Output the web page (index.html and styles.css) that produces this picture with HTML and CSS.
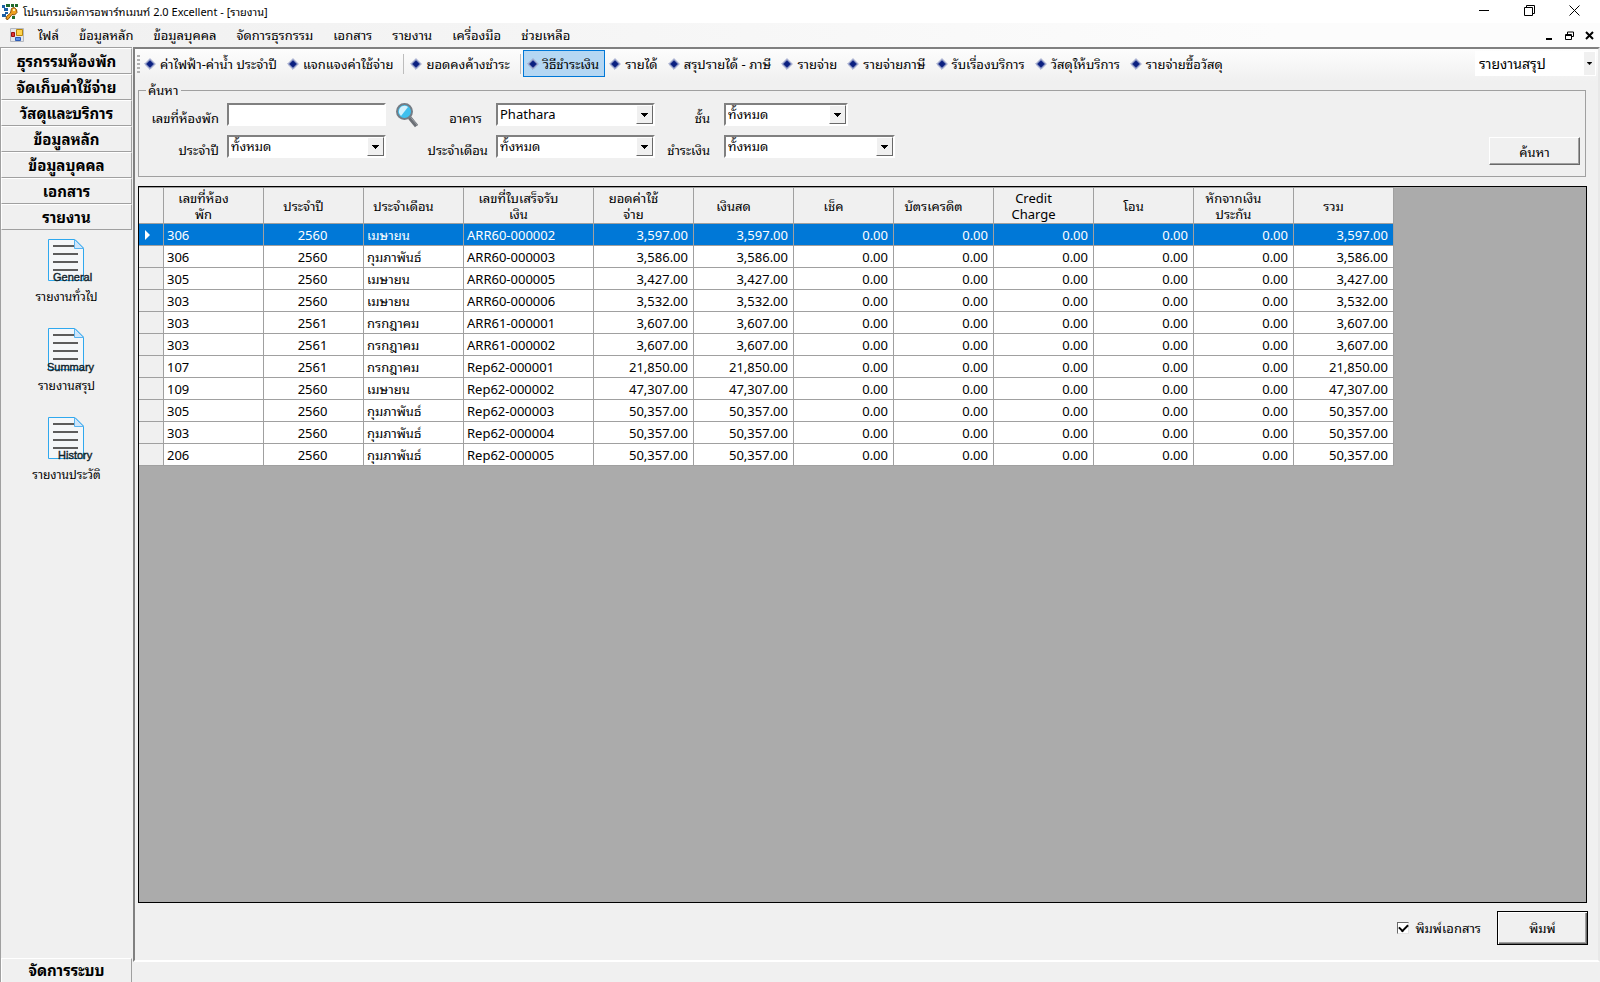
FILE: index.html
```html
<!DOCTYPE html>
<html lang="th">
<head>
<meta charset="utf-8">
<title>โปรแกรมจัดการอพาร์ทเมนท์ 2.0 Excellent - [รายงาน]</title>
<link rel="stylesheet" href="styles.css">
</head>
<body>
<svg class="defs" width="0" height="0" aria-hidden="true">
  <symbol id="diamond" viewBox="0 0 12 12"><path d="M6 .7 11.300 6 6 11.300 .7 6Z" fill="#dfe3f2" stroke="#8c96c0"/><path d="M6 2.500 9.500 6 6 9.500 2.500 6Z" fill="#0a1f80" stroke="#0a1f80"/></symbol>
  <symbol id="arrow" viewBox="0 0 7 4"><path d="M0 0H7V1H6V2H5V3H4V4H3V3H2V2H1V1H0Z"/></symbol>
  <symbol id="doc" viewBox="0 0 36 42"><path d="M.5.5H27L35.500 9V41.500H.5Z" fill="#f4f6f8" stroke="#2fa8ee"/><path d="M26.500.5V9.500H35.500Z" fill="#cfe6fb" stroke="#5ab4f0"/><path d="M5 7H26M5 15H30M5 23H30M5 31H30" stroke="#5c5c5c" stroke-width="2"/></symbol>
</svg>
<div class="window">
  <header class="titlebar">
    <svg class="app-icon" viewBox="0 0 16 16" aria-hidden="true"><path d="M4 0H8V3H4ZM9 0H12V3H9ZM13 0H16V3H13Z" fill="#1f6b2e"/><path d="M0 1H3V4H0ZM2 4H6V7H2ZM0 10H4V13H0ZM3 8H6V10H3Z" fill="#1c5fa5"/><path d="M9.500 4.500 12 3.500 14.500 5.500 15 8.500 12.500 11 10 10.500 6 15.500 4 15 4.500 12.500 8.500 9Z" fill="#f0a020" stroke="#8a5008"/><path d="M11 5H13V7H11Z" fill="#fff1b0"/><path d="M10 12H13V15H10Z" fill="#1f6b2e"/></svg>
    <h1>โปรแกรมจัดการอพาร์ทเมนท์ 2.0 Excellent - [รายงาน]</h1>
    <div class="window-buttons">
      <button type="button" aria-label="Minimize"><svg width="11" height="11"><path d="M0 5.500H10"/></svg></button>
      <button type="button" aria-label="Restore"><svg width="11" height="11"><path d="M.5 2.500H8.500V10.500H.5ZM2.500 2.500V.5H10.500V8.500H8.500"/></svg></button>
      <button type="button" aria-label="Close"><svg width="11" height="11"><path d="M.5.5 10.500 10.500M10.500.5.5 10.500"/></svg></button>
    </div>
  </header>
  <nav class="menubar">
    <svg class="form-icon" viewBox="0 0 14 14" aria-hidden="true"><path d="M.5.5H13.500V13.500H.5Z" fill="#e4e6ea" stroke="#b4b8c0"/><path d="M6.500 1.500H12.500V7.500H6.500Z" fill="#ffd34d" stroke="#b88608"/><path d="M1.500 4.500H4.500V8.500H1.500Z" fill="#d33" stroke="#911"/><path d="M5.500 9.500H10.500V12.500H5.500Z" fill="#5b8fe8" stroke="#2c5cb8"/></svg>
    <button type="button">ไฟล์</button><button type="button">ข้อมูลหลัก</button><button type="button">ข้อมูลบุคคล</button><button type="button">จัดการธุรกรรม</button><button type="button">เอกสาร</button><button type="button">รายงาน</button><button type="button">เครื่องมือ</button><button type="button">ช่วยเหลือ</button>
    <div class="mdi-buttons">
      <button type="button" aria-label="Minimize child"><svg width="9" height="9"><path d="M1 8H7" stroke-width="2"/></svg></button>
      <button type="button" aria-label="Restore child"><svg width="9" height="9"><path d="M.5 3.500H6.500V8.500H.5ZM2.500 3V1H8.500V5.500H7M.5 4.500H6"/></svg></button>
      <button type="button" aria-label="Close child"><svg width="9" height="9"><path d="M1 1 8 8M8 1 1 8" stroke-width="2"/></svg></button>
    </div>
  </nav>
  <div class="body">
    <aside class="sidebar">
      <button type="button" class="group">ธุรกรรมห้องพัก</button>
      <button type="button" class="group">จัดเก็บค่าใช้จ่าย</button>
      <button type="button" class="group">วัสดุและบริการ</button>
      <button type="button" class="group">ข้อมูลหลัก</button>
      <button type="button" class="group">ข้อมูลบุคคล</button>
      <button type="button" class="group">เอกสาร</button>
      <button type="button" class="group">รายงาน</button>
      <div class="shortcuts">
        <a href="#general"><svg width="38" height="46" aria-hidden="true"><use href="#doc" width="36" height="42"/><text x="5" y="42">General</text></svg><span>รายงานทั่วไป</span></a>
        <a href="#summary"><svg width="38" height="46" aria-hidden="true"><use href="#doc" width="36" height="42"/><text x="-1" y="43">Summary</text></svg><span>รายงานสรุป</span></a>
        <a href="#history"><svg width="38" height="46" aria-hidden="true"><use href="#doc" width="36" height="42"/><text x="10" y="42">History</text></svg><span>รายงานประวัติ</span></a>
      </div>
      <button type="button" class="group">จัดการระบบ</button>
    </aside>
    <div class="workspace">
      <main class="report">
        <div class="toolbar">
          <span class="grip"></span>
          <button type="button"><svg><use href="#diamond"/></svg>ค่าไฟฟ้า-ค่าน้ำ ประจำปี</button>
          <button type="button"><svg><use href="#diamond"/></svg>แจกแจงค่าใช้จ่าย</button>
          <span class="divider"></span>
          <button type="button"><svg><use href="#diamond"/></svg>ยอดคงค้างชำระ</button>
          <span class="divider"></span>
          <button type="button" class="active"><svg><use href="#diamond"/></svg>วิธีชำระเงิน</button>
          <button type="button"><svg><use href="#diamond"/></svg>รายได้</button>
          <button type="button"><svg><use href="#diamond"/></svg>สรุปรายได้ - ภาษี</button>
          <button type="button"><svg><use href="#diamond"/></svg>รายจ่าย</button>
          <button type="button"><svg><use href="#diamond"/></svg>รายจ่ายภาษี</button>
          <button type="button"><svg><use href="#diamond"/></svg>รับเรื่องบริการ</button>
          <button type="button"><svg><use href="#diamond"/></svg>วัสดุให้บริการ</button>
          <button type="button"><svg><use href="#diamond"/></svg>รายจ่ายซื้อวัสดุ</button>
          <span class="flat-select"><select aria-label="ประเภทรายงาน"><option>รายงานสรุป</option></select><span class="drop"><svg width="5" height="3" viewBox="0 0 7 4"><use href="#arrow"/></svg></span></span>
        </div>
        <fieldset class="search">
          <legend>ค้นหา</legend>
          <div class="fields">
            <label for="room">เลขที่ห้องพัก</label>
            <input id="room" type="text">
            <button type="button" class="lookup" aria-label="ค้นหาห้องพัก"><svg width="25" height="26" viewBox="0 0 25 26"><path d="M14.500 14.500 21.500 23" stroke="#6b6f75" stroke-width="4"/><path d="M15 13.500 22.500 22.500" stroke="#9a9ea3" stroke-width="1"/><circle cx="9.500" cy="8.500" r="7.500" fill="#3fc0ee" stroke="#747c85" stroke-width="2"/><path d="M4 10C3 4 9 1 13 4L6 13Z" fill="#d3f1fd"/></svg></button>
            <label for="building" class="inset">อาคาร</label>
            <span class="combo"><select id="building"><option>Phathara</option></select><span class="drop"><svg width="7" height="4"><use href="#arrow"/></svg></span></span>
            <label for="floor" class="inset">ชั้น</label>
            <span class="combo short"><select id="floor"><option>ทั้งหมด</option></select><span class="drop"><svg width="7" height="4"><use href="#arrow"/></svg></span></span>
            <label for="year">ประจำปี</label>
            <span class="combo"><select id="year"><option>ทั้งหมด</option></select><span class="drop"><svg width="7" height="4"><use href="#arrow"/></svg></span></span>
            <label for="month" class="wide">ประจำเดือน</label>
            <span class="combo"><select id="month"><option>ทั้งหมด</option></select><span class="drop"><svg width="7" height="4"><use href="#arrow"/></svg></span></span>
            <label for="pay" class="inset">ชำระเงิน</label>
            <span class="combo"><select id="pay"><option>ทั้งหมด</option></select><span class="drop"><svg width="7" height="4"><use href="#arrow"/></svg></span></span>
          </div>
          <button type="submit" class="push">ค้นหา</button>
        </fieldset>
        <div class="grid">
          <table>
            <colgroup><col class="marker"><col><col><col><col class="receipt"><col><col><col><col><col><col><col><col></colgroup>
            <thead><tr><th></th><th>เลขที่ห้อง<br>พัก</th><th>ประจำปี</th><th>ประจำเดือน</th><th>เลขที่ใบเสร็จรับ<br>เงิน</th><th>ยอดค่าใช้<br>จ่าย</th><th>เงินสด</th><th>เช็ค</th><th>บัตรเครดิต</th><th>Credit<br>Charge</th><th>โอน</th><th>หักจากเงิน<br>ประกัน</th><th>รวม</th></tr></thead>
            <tbody>
              <tr class="selected"><th><svg width="5" height="10"><path d="M0 0 5 5 0 10Z" fill="#fff"/></svg></th><td>306</td><td>2560</td><td>เมษายน</td><td>ARR60-000002</td><td>3,597.00</td><td>3,597.00</td><td>0.00</td><td>0.00</td><td>0.00</td><td>0.00</td><td>0.00</td><td>3,597.00</td></tr>
              <tr><th></th><td>306</td><td>2560</td><td>กุมภาพันธ์</td><td>ARR60-000003</td><td>3,586.00</td><td>3,586.00</td><td>0.00</td><td>0.00</td><td>0.00</td><td>0.00</td><td>0.00</td><td>3,586.00</td></tr>
              <tr><th></th><td>305</td><td>2560</td><td>เมษายน</td><td>ARR60-000005</td><td>3,427.00</td><td>3,427.00</td><td>0.00</td><td>0.00</td><td>0.00</td><td>0.00</td><td>0.00</td><td>3,427.00</td></tr>
              <tr><th></th><td>303</td><td>2560</td><td>เมษายน</td><td>ARR60-000006</td><td>3,532.00</td><td>3,532.00</td><td>0.00</td><td>0.00</td><td>0.00</td><td>0.00</td><td>0.00</td><td>3,532.00</td></tr>
              <tr><th></th><td>303</td><td>2561</td><td>กรกฎาคม</td><td>ARR61-000001</td><td>3,607.00</td><td>3,607.00</td><td>0.00</td><td>0.00</td><td>0.00</td><td>0.00</td><td>0.00</td><td>3,607.00</td></tr>
              <tr><th></th><td>303</td><td>2561</td><td>กรกฎาคม</td><td>ARR61-000002</td><td>3,607.00</td><td>3,607.00</td><td>0.00</td><td>0.00</td><td>0.00</td><td>0.00</td><td>0.00</td><td>3,607.00</td></tr>
              <tr><th></th><td>107</td><td>2561</td><td>กรกฎาคม</td><td>Rep62-000001</td><td>21,850.00</td><td>21,850.00</td><td>0.00</td><td>0.00</td><td>0.00</td><td>0.00</td><td>0.00</td><td>21,850.00</td></tr>
              <tr><th></th><td>109</td><td>2560</td><td>เมษายน</td><td>Rep62-000002</td><td>47,307.00</td><td>47,307.00</td><td>0.00</td><td>0.00</td><td>0.00</td><td>0.00</td><td>0.00</td><td>47,307.00</td></tr>
              <tr><th></th><td>305</td><td>2560</td><td>กุมภาพันธ์</td><td>Rep62-000003</td><td>50,357.00</td><td>50,357.00</td><td>0.00</td><td>0.00</td><td>0.00</td><td>0.00</td><td>0.00</td><td>50,357.00</td></tr>
              <tr><th></th><td>303</td><td>2560</td><td>กุมภาพันธ์</td><td>Rep62-000004</td><td>50,357.00</td><td>50,357.00</td><td>0.00</td><td>0.00</td><td>0.00</td><td>0.00</td><td>0.00</td><td>50,357.00</td></tr>
              <tr><th></th><td>206</td><td>2560</td><td>กุมภาพันธ์</td><td>Rep62-000005</td><td>50,357.00</td><td>50,357.00</td><td>0.00</td><td>0.00</td><td>0.00</td><td>0.00</td><td>0.00</td><td>50,357.00</td></tr>
            </tbody>
          </table>
        </div>
        <footer class="actions">
          <label class="check"><input type="checkbox" checked>พิมพ์เอกสาร</label>
          <button type="button" class="push default">พิมพ์</button>
        </footer>
      </main>
      <div class="statusbar"></div>
    </div>
  </div>
</div>
</body>
</html>
```
FILE: styles.css
```css
* { box-sizing: border-box; }
body { margin: 0; }
body, button, input, select { font-family: "Noto Sans", "Noto Sans Thai Looped", "Loma", "Waree", "Garuda", "Noto Sans Thai", sans-serif; font-size: 13px; color: #000; }
button { padding: 0; border: 0; background: none; white-space: nowrap; }
.defs { position: absolute; }
.window { display: flex; flex-direction: column; height: 100vh; background: #f0f0f0; overflow: hidden; }

.titlebar { display: flex; align-items: center; height: 23px; padding: 0 3px 0 2px; background: #fff; flex: none; }
.app-icon { width: 16px; height: 16px; }
.titlebar h1 { margin: 0 0 0 5px; font-size: 11px; line-height: 22px; font-weight: 400; flex: 1; white-space: nowrap; }
.window-buttons { display: flex; align-self: flex-start; }
.window-buttons button { width: 45px; height: 20px; display: flex; align-items: center; justify-content: center; }
.window-buttons svg, .mdi-buttons svg { fill: none; stroke: #000; }

.menubar { display: flex; align-items: center; height: 24px; padding-left: 10px; background: linear-gradient(90deg, #f0f0f0, #fcfcfc 80%); flex: none; }
.form-icon { width: 14px; height: 14px; margin-right: 4px; }
.menubar > button { padding: 0 10px; line-height: 24px; }
.mdi-buttons { display: flex; gap: 11px; margin-left: auto; padding-right: 6px; }
.mdi-buttons button { display: flex; }

.body { display: flex; flex: 1; min-height: 0; }
.sidebar { width: 132px; display: flex; flex-direction: column; flex: none; border-left: 1px solid #a0a0a0; border-top: 1px solid #a0a0a0; }
.group { height: 26px; flex: none; font-size: 15px; font-weight: 700; line-height: 22px; border: 1px solid; border-color: #fff #a0a0a0 #a0a0a0 #fff; padding-bottom: 1px; }
.group:last-child { height: 24px; border-bottom: 0; }
.shortcuts { flex: 1; padding-top: 9px; }
.shortcuts a { display: flex; flex-direction: column; align-items: center; height: 89px; color: #000; font-size: 12px; text-decoration: none; }
.shortcuts svg { overflow: visible; }
.shortcuts text { font: 11px "Liberation Sans", sans-serif; fill: #10242c; stroke: #10242c; stroke-width: .4; }
.shortcuts span { line-height: 24px; }

.workspace { flex: 1; min-width: 0; margin-left: 1px; display: flex; flex-direction: column; }
.report { flex: 1; min-height: 0; display: flex; flex-direction: column; border: 2px solid; border-color: #808080 #e8e8e8 #fff #808080; }
.statusbar { height: 20px; flex: none; }

.toolbar { display: flex; align-items: flex-start; height: 32px; padding: 1px 2px 0 2px; background: linear-gradient(#fdfdfd, #f0f0f0); }
.grip { width: 3px; height: 20px; margin: 5px 0 0 0; background: repeating-linear-gradient(#b0b0b0 0 2px, transparent 2px 4px); }
.toolbar > button { display: flex; align-items: center; gap: 4px; height: 27px; padding: 0 5px 0 3px; border: 1px solid transparent; }
.toolbar > button svg { width: 12px; height: 12px; }
.toolbar > .active { background: #b5d7f3; border-color: #0078d7; }
.divider { width: 1px; height: 20px; margin: 4px 2px 0 4px; background: #bdbdbd; }
.flat-select { position: relative; width: 121px; height: 25px; margin: 1px 0 0 auto; background: #fff; display: flex; }
.flat-select select { appearance: none; width: 100%; border: 0; padding: 0 16px 0 4px; background: none; font-size: 14px; }
.flat-select .drop { position: absolute; right: 1px; top: 1px; bottom: 1px; width: 11px; background: #f0f0f0; display: flex; align-items: center; justify-content: center; pointer-events: none; }

.search { display: flex; justify-content: space-between; align-items: flex-end; margin: 1px 12px 0 3px; padding: 0 5px 11px 0; min-width: 0; border: 1px solid #a0a0a0; }
.search legend { margin-left: 7px; padding: 0 3px 0 2px; line-height: 17px; }
.fields { display: grid; grid-template-columns: 80px 159px 26px 60px 159px 53px 171px; grid-template-rows: 23px 23px; gap: 9px 8px; padding: 4px 0 7px; }
.fields label { text-align: right; line-height: 31px; white-space: nowrap; }
.fields .inset { padding-right: 6px; }
.fields .wide { grid-column: span 2; }
.fields input { border: 2px solid; border-color: #808080 #fff #fff #808080; background: #fff; min-width: 0; }
.lookup { display: flex; justify-content: flex-end; }
.combo { position: relative; display: flex; border: 2px solid; border-color: #808080 #fff #fff #808080; background: #fff; }
.combo.short { margin-right: 47px; }
.combo select { appearance: none; width: 100%; border: 0; padding: 0 18px 0 2px; background: none; line-height: 19px; }
.drop svg { fill: #000; }
.combo .drop { position: absolute; right: 0; top: 0; bottom: 0; width: 17px; background: #f0f0f0; border: 1px solid; border-color: #fff #696969 #696969 #fff; display: flex; align-items: center; justify-content: center; pointer-events: none; }
.push { width: 91px; height: 28px; background: #f0f0f0; border: 1px solid; border-color: #fff #696969 #696969 #fff; box-shadow: inset -1px -1px #a0a0a0; flex: none; }
.push.default { height: 34px; border-color: #000; box-shadow: inset 1px 1px #fff, inset -1px -1px #696969, inset -2px -2px #a0a0a0; }

.grid { flex: 1; min-height: 0; margin: 9px 11px 0 3px; border: 1px solid #000; background: #ababab; overflow: hidden; }
table { border-collapse: separate; border-spacing: 0; table-layout: fixed; width: 1255px; }
col { width: 100px; }
.marker { width: 25px; }
.receipt { width: 130px; }
th, td { padding: 0; font-weight: 400; border-right: 1px solid #a0a0a0; border-bottom: 1px solid #a0a0a0; white-space: nowrap; }
thead th { height: 37px; padding-right: 20px; line-height: 16px; background: #f0f0f0; border-top: 1px solid #a0a0a0; }
td { height: 22px; line-height: 20px; padding: 1px 5px 0 3px; text-align: right; background: #fff; }
td:nth-child(2), td:nth-child(4), td:nth-child(5) { text-align: left; }
td:nth-child(3) { text-align: center; padding: 1px 2px 0 0; }
tbody th { background: #f0f0f0; text-align: left; padding-left: 6px; }
tbody th svg { display: block; }
.selected td, .selected th { background: #0078d7; color: #fff; }

.actions { display: flex; justify-content: flex-end; align-items: center; gap: 16px; height: 57px; padding: 0 10px 8px 0; flex: none; }
.check { display: flex; align-items: center; gap: 6px; line-height: 20px; }
.check input { appearance: none; width: 12px; height: 12px; margin: 0; background: #fff; border: 1px solid; border-color: #696969 #e3e3e3 #e3e3e3 #696969; display: grid; place-items: center; }
.check input:checked::after { content: ""; width: 7px; height: 4px; border: solid #000; border-width: 0 0 2px 2px; rotate: -45deg; margin-bottom: 2px; }
```
